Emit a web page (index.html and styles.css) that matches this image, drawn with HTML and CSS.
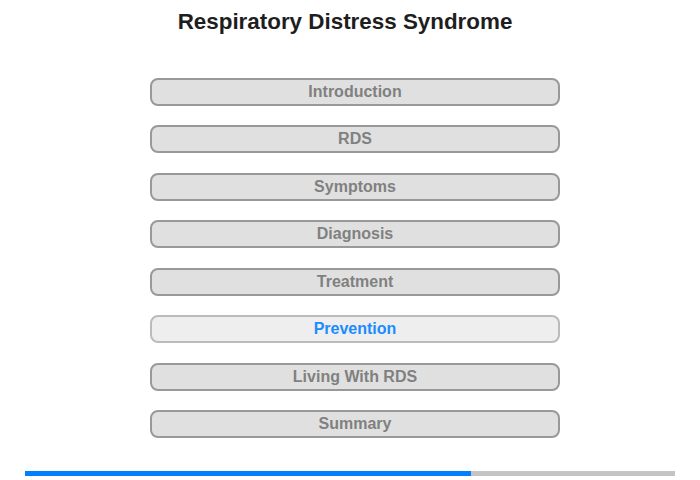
FILE: index.html
```html
<!DOCTYPE html>
<html>
<head>
<meta charset="utf-8">
<link rel="stylesheet" href="styles.css">
</head>
<body>
<div class="page">
  <h1 class="title">Respiratory Distress Syndrome</h1>
  <nav class="menu">
    <div class="item">Introduction</div>
    <div class="item">RDS</div>
    <div class="item">Symptoms</div>
    <div class="item">Diagnosis</div>
    <div class="item">Treatment</div>
    <div class="item active">Prevention</div>
    <div class="item">Living With RDS</div>
    <div class="item">Summary</div>
  </nav>
  <div class="progress"><div class="fill" style="width: 68.6%"></div></div>
</div>
</body>
</html>
```
FILE: styles.css
```css
html, body {
  margin: 0;
  padding: 0;
  background: #ffffff;
  font-family: "Liberation Sans", Arial, sans-serif;
}
.page {
  width: 700px;
  height: 480px;
  display: flex;
  flex-direction: column;
}
.title {
  margin: 10px 0 0 0;
  padding-right: 10px;
  height: 24px;
  line-height: 24px;
  font-size: 22.4px;
  font-weight: bold;
  color: #1e1e1e;
  text-align: center;
}
.menu {
  margin: 43.9px 0 0 150px;
  width: 410px;
  display: flex;
  flex-direction: column;
  gap: 19.5px;
}
.item {
  box-sizing: border-box;
  height: 28px;
  border: 2px solid #999999;
  border-radius: 8px;
  background: #e0e0e0;
  color: #808080;
  font-size: 16px;
  font-weight: bold;
  line-height: 24px;
  text-align: center;
}
.item.active {
  background: #eeeeee;
  border-color: #bbbbbb;
  color: #1a8cff;
}
.progress {
  margin: 33px 0 0 25px;
  width: 650px;
  height: 5px;
  background: #c4c4c4;
}
.fill {
  height: 100%;
  background: #0080ff;
}
```
